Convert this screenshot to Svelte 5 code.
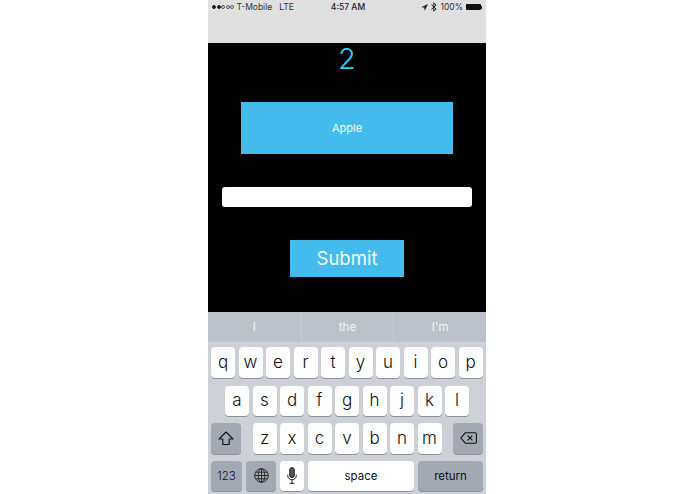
<script>
  const row1 = ['q','w','e','r','t','y','u','i','o','p'];
  const row2 = ['a','s','d','f','g','h','j','k','l'];
  const row3 = ['z','x','c','v','b','n','m'];
  const suggestions = ['I','the',"I'm"];
</script>

<div class="page">
  <div class="phone">
    <header class="top">
      <div class="status">
        <div class="left">
          <span class="dots"><i class="on"></i><i class="on"></i><i></i><i></i><i></i></span>
          <span class="carrier">T-Mobile</span>
          <span class="lte">LTE</span>
        </div>
        <div class="time">4:57 AM</div>
        <div class="right">
          <svg width="7" height="7" viewBox="0 0 7 7"><path d="M7 0 L0 3.2 L3.2 3.6 L3.7 7 Z" fill="#222"/></svg>
          <svg width="6" height="10" viewBox="0 0 6 10"><path d="M0.4 2.6 L5 6.9 L2.8 9.2 V0.8 L5 3.1 L0.4 7.4" fill="none" stroke="#222" stroke-width="1"/></svg>
          <span class="pct">100%</span>
          <span class="battery"></span><span class="nub"></span>
        </div>
      </div>
    </header>

    <main class="game">
      <div class="count">2</div>
      <div class="word">Apple</div>
      <div class="input"></div>
      <div class="submit">Submit</div>
    </main>

    <section class="kb">
      <div class="suggest">
        {#each suggestions as s}<div class="sug">{s}</div>{/each}
      </div>
      <div class="row r1">
        {#each row1 as k}<div class="key">{k}</div>{/each}
      </div>
      <div class="row r2">
        {#each row2 as k}<div class="key">{k}</div>{/each}
      </div>
      <div class="row r3">
        <div class="key dark shift">
          <svg width="16" height="15" viewBox="0 0 16 15"><path d="M8 1 L15 8 H11.2 V13.5 H4.8 V8 H1 Z" fill="none" stroke="#111" stroke-width="1.1" stroke-linejoin="round"/></svg>
        </div>
        <div class="mid">
          {#each row3 as k}<div class="key">{k}</div>{/each}
        </div>
        <div class="key dark shift">
          <svg width="17" height="12" viewBox="0 0 17 12"><path d="M5.5 0.7 H15 a1.4 1.4 0 0 1 1.4 1.4 V9.9 a1.4 1.4 0 0 1 -1.4 1.4 H5.5 L0.8 6 Z" fill="none" stroke="#111" stroke-width="1.1" stroke-linejoin="round"/><path d="M7.6 3.6 L12.4 8.4 M12.4 3.6 L7.6 8.4" stroke="#111" stroke-width="1.1"/></svg>
        </div>
      </div>
      <div class="row r4">
        <div class="key dark num">123</div>
        <div class="key dark globe">
          <svg width="15" height="15" viewBox="0 0 15 15" fill="none" stroke="#222" stroke-width="0.9"><circle cx="7.5" cy="7.5" r="6.8"/><ellipse cx="7.5" cy="7.5" rx="3.3" ry="6.8"/><path d="M7.5 0.7 V14.3 M0.7 7.5 H14.3 M1.6 4.2 H13.4 M1.6 10.8 H13.4"/></svg>
        </div>
        <div class="key mic">
          <svg width="10" height="17" viewBox="0 0 10 17" fill="none" stroke="#222" stroke-width="1"><rect x="2.7" y="0.6" width="4.6" height="10" rx="2.3" fill="#555"/><path d="M0.7 7.5 V8.5 a4.3 4.3 0 0 0 8.6 0 V7.5 M5 12.8 V16 M2.5 16.3 H7.5"/></svg>
        </div>
        <div class="key space">space</div>
        <div class="key dark ret">return</div>
      </div>
    </section>
  </div>
</div>

<style>
  :global(body) { margin: 0; background: #fff; }
  .page {
    width: 695px;
    height: 494px;
    display: flex;
    justify-content: flex-start;
    padding-left: 208px;
    box-sizing: border-box;
    overflow: hidden;
    font-family: Inter, "Liberation Sans", sans-serif;
  }
  .phone { width: 278px; height: 494px; display: flex; flex-direction: column; }

  .top { height: 43px; background: #e0e0e0; flex: none; }
  .status {
    height: 14px;
    padding: 0 4px;
    display: grid;
    grid-template-columns: 1fr auto 1fr;
    align-items: center;
    font-size: 8.5px;
    color: #333;
  }
  .left { display: flex; align-items: center; }
  .dots { display: flex; gap: 0.6px; margin-right: 2px; }
  .dots i { width: 4px; height: 4px; box-sizing: border-box; border-radius: 50%; border: 0.5px solid #555; }
  .dots i.on { background: #222; border-color: #222; }
  .lte { margin-left: 7px; }
  .time { font-weight: 500; color: #222; padding-left: 2px; }
  .right { display: flex; align-items: center; justify-content: flex-end; gap: 3px; }
  .battery { width: 15px; height: 6px; background: #111; border-radius: 1px; }
  .nub { width: 1px; height: 3px; background: #111; margin-left: -3px; }

  .game {
    height: 269px;
    flex: none;
    background: #000;
    display: flex;
    flex-direction: column;
    align-items: center;
  }
  .count { height: 30px; line-height: 31px; font-size: 29px; font-weight: 300; color: #2fd0f2; }
  .word {
    margin-top: 29px;
    width: 212px;
    height: 51.5px;
    background: #44bbed;
    color: #f4fbff;
    font-size: 11px;
    display: flex;
    align-items: center;
    justify-content: center;
  }
  .input { margin-top: 33.5px; width: 250px; height: 20px; background: #fff; border-radius: 3px; }
  .submit {
    margin-top: 33px;
    width: 114px;
    height: 36.5px;
    background: #44bbed;
    color: #f4fbff;
    font-size: 18.5px;
    font-weight: 400;
    display: flex;
    align-items: center;
    justify-content: center;
  }

  .kb { flex: 1; background: #cdd1d7; display: flex; flex-direction: column; }
  .suggest { height: 30px; background: #bcc2ca; display: grid; grid-template-columns: repeat(3, 1fr); flex: none; }
  .sug {
    display: flex;
    align-items: center;
    justify-content: center;
    color: #f3f5f7;
    font-size: 11.5px;
    padding-bottom: 1px;
  }
  .sug + .sug { border-left: 1px solid #c8ccd2; }

  .row { display: flex; height: 30.5px; flex: none; }
  .r1 { margin-top: 5px; padding: 0 3px; gap: 3.5px; }
  .r2 { margin-top: 8px; padding: 0 17px; gap: 3.5px; }
  .r3 { margin-top: 7px; padding: 0 3px; justify-content: space-between; }
  .r4 { margin-top: 7px; padding: 0 3px; gap: 4px; }
  .mid { display: flex; gap: 3.5px; }

  .key {
    width: 24px;
    background: #fff;
    border-radius: 4px;
    box-shadow: 0 1px 0 #8e9298;
    display: flex;
    align-items: center;
    justify-content: center;
    color: #111;
    font-size: 17px;
    font-weight: 300;
    padding-bottom: 1px;
    box-sizing: border-box;
  }
  .dark { background: #a3a9b3; }
  .shift { width: 30px; padding-bottom: 0; }
  .num { width: 31px; font-size: 11.5px; padding-bottom: 0; }
  .globe { width: 30px; padding-bottom: 0; }
  .mic { width: 24px; padding-bottom: 0; }
  .space { width: 106px; font-size: 11.5px; padding-bottom: 0; font-weight: 400; }
  .ret { width: 65px; font-size: 11.5px; padding-bottom: 0; font-weight: 400; }
</style>
